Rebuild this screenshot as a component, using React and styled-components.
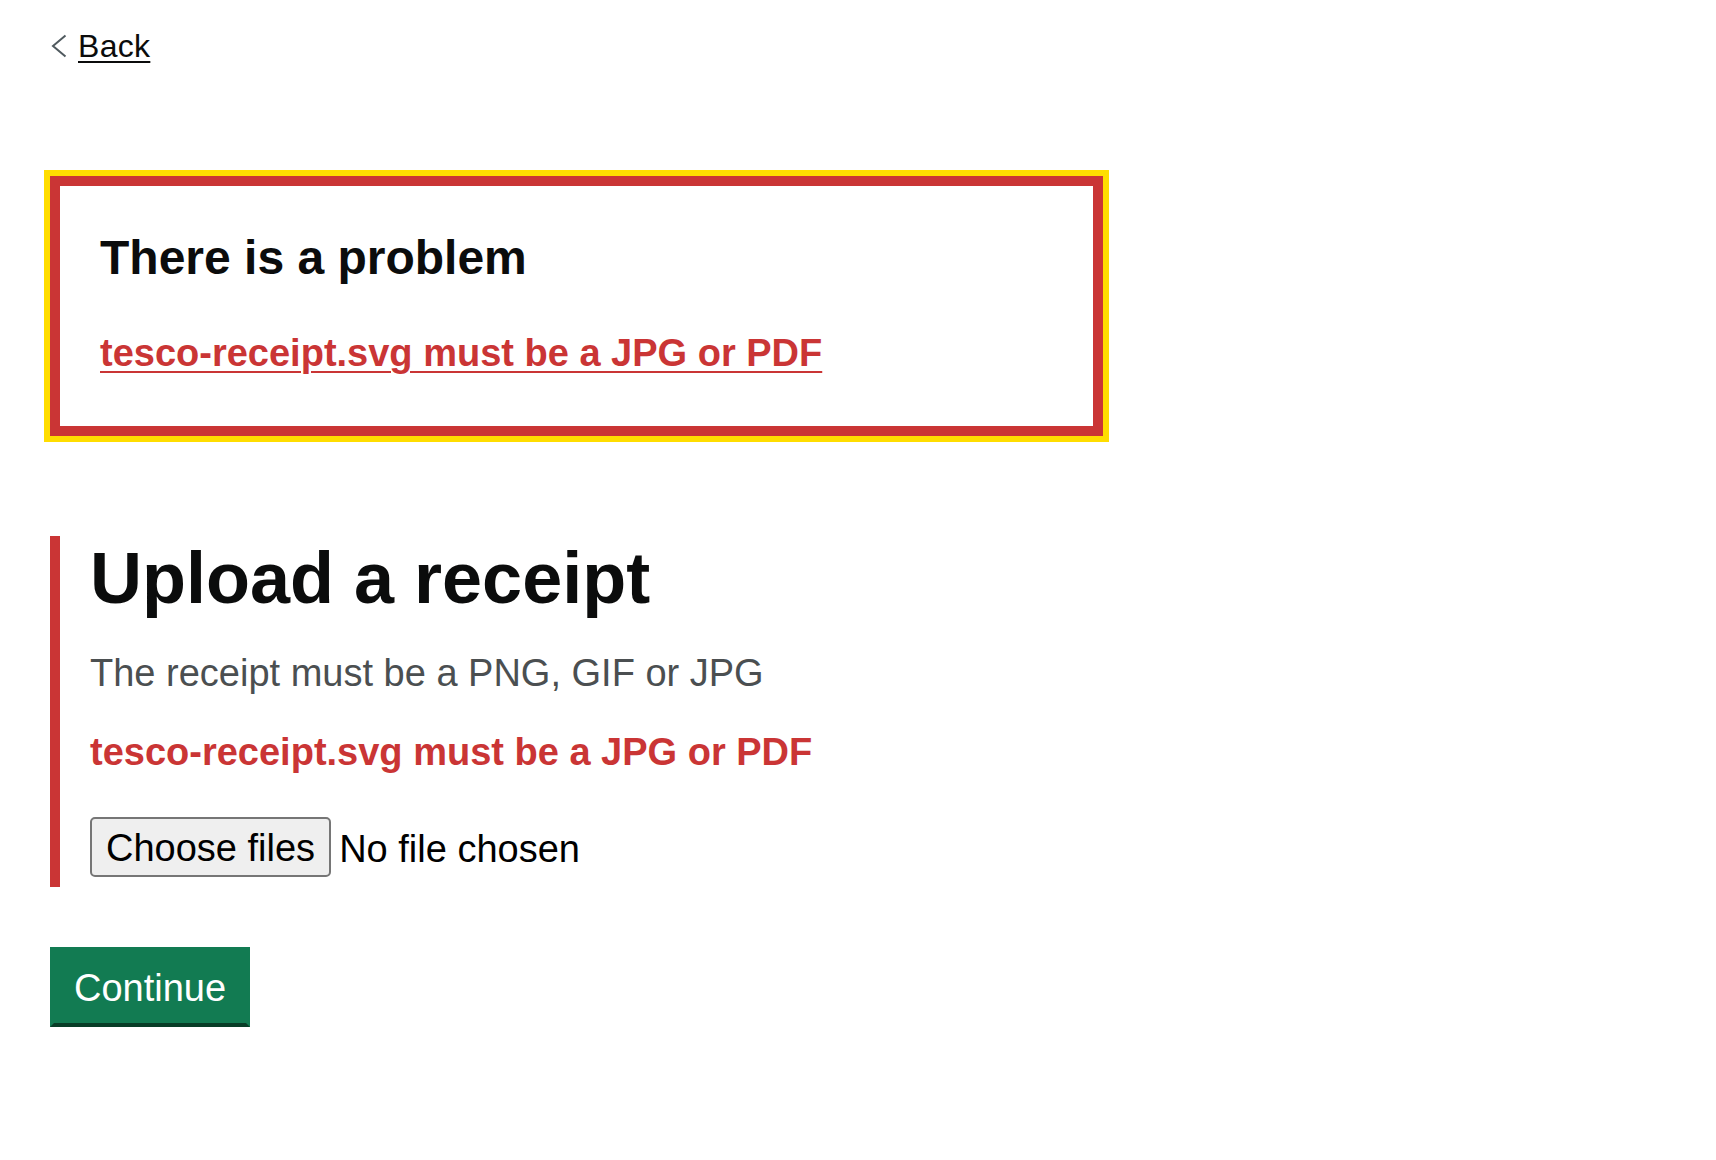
import React from "react";
import styled, { createGlobalStyle } from "styled-components";

const red = "#ca3535";
const black = "#0b0c0c";

const GlobalStyle = createGlobalStyle`
    body{
        margin: 0;
        background: #ffffff;
        color: ${black};
        font-family: "Liberation Sans", Arial, sans-serif;
    }
`;

const Page = styled.main`
    padding: 26px 0 0 50px;
`;

const BackLink = styled.a`
    display: inline-flex;
    align-items: center;
    font-size: 32px;
    line-height: 40px;
    color: ${black};
    text-decoration: none;
    cursor: pointer;

    span{
        margin-left: 2px;
        letter-spacing: 0.3px;
        text-decoration: underline;
        text-decoration-thickness: 2px;
        text-underline-offset: 4px;
    }
`;

const Chevron = () => (
    <svg width="26" height="24" viewBox="0 0 26 24" fill="none">
        <path d="M15.5 1.5 L3 12 L15.5 22.5" stroke="#505a5f" strokeWidth="2" />
    </svg>
);

const ErrorSummary = styled.div`
    box-sizing: border-box;
    width: 1053px;
    margin-top: 110px;
    padding: 42px 40px 38px;
    border: 10px solid ${red};
    outline: 6px solid #ffdd00;

    h2{
        margin: 0 0 40px;
        font-size: 48px;
        line-height: 60px;
        font-weight: 700;
    }

    ul{
        list-style: none;
        margin: 0;
        padding: 0;
    }

    li{
        margin-bottom: 10px;
    }

    a{
        font-size: 38px;
        line-height: 50px;
        font-weight: 700;
        color: ${red};
        text-decoration: underline;
        text-decoration-thickness: 2px;
        text-underline-offset: 5px;
    }
`;

const FormGroup = styled.div`
    margin-top: 100px;
    padding: 2px 0 0 30px;
    border-left: 10px solid ${red};
`;

const Heading = styled.h1`
    margin: 0 0 30px;
    font-size: 72px;
    line-height: 80px;
    font-weight: 700;
`;

const Hint = styled.div`
    margin-bottom: 29px;
    font-size: 38px;
    line-height: 50px;
    color: #4b4f51;
`;

const ErrorMessage = styled.p`
    margin: 0 0 30px;
    font-size: 38px;
    line-height: 50px;
    font-weight: 700;
    color: ${red};
`;

const FileUpload = styled.label`
    display: inline-flex;
    align-items: center;
    margin-left: -10px;
    padding: 10px;
    font-size: 38px;
    color: #000000;

    input{
        display: none;
    }
`;

const FileButton = styled.span`
    box-sizing: border-box;
    display: inline-flex;
    align-items: center;
    height: 60px;
    padding: 3px 14px 0;
    margin-right: 8px;
    border: 2px solid #767676;
    border-radius: 5px;
    background: #efefef;
`;

const FileStatus = styled.span`
    padding-top: 4px;
`;

const Button = styled.button`
    display: block;
    margin-top: 60px;
    padding: 18px 20px 16px;
    border: 4px solid #127b52;
    border-bottom-color: #083d27;
    border-radius: 0;
    background: #127b52;
    color: #ffffff;
    font-family: inherit;
    font-size: 38px;
    line-height: 38px;
    cursor: pointer;
`;

const App = () => {
    return (
        <>
            <GlobalStyle />
            <Page>
                <BackLink>
                    <Chevron />
                    <span>Back</span>
                </BackLink>

                <ErrorSummary role="alert">
                    <h2>There is a problem</h2>
                    <ul>
                        <li><a href="#receipt">tesco-receipt.svg must be a JPG or PDF</a></li>
                    </ul>
                </ErrorSummary>

                <FormGroup>
                    <Heading>Upload a receipt</Heading>
                    <Hint>The receipt must be a PNG, GIF or JPG</Hint>
                    <ErrorMessage>tesco-receipt.svg must be a JPG or PDF</ErrorMessage>
                    <FileUpload>
                        <input id="receipt" type="file" multiple />
                        <FileButton>Choose files</FileButton>
                        <FileStatus>No file chosen</FileStatus>
                    </FileUpload>
                </FormGroup>

                <Button>Continue</Button>
            </Page>
        </>
    );
};

export default App;
